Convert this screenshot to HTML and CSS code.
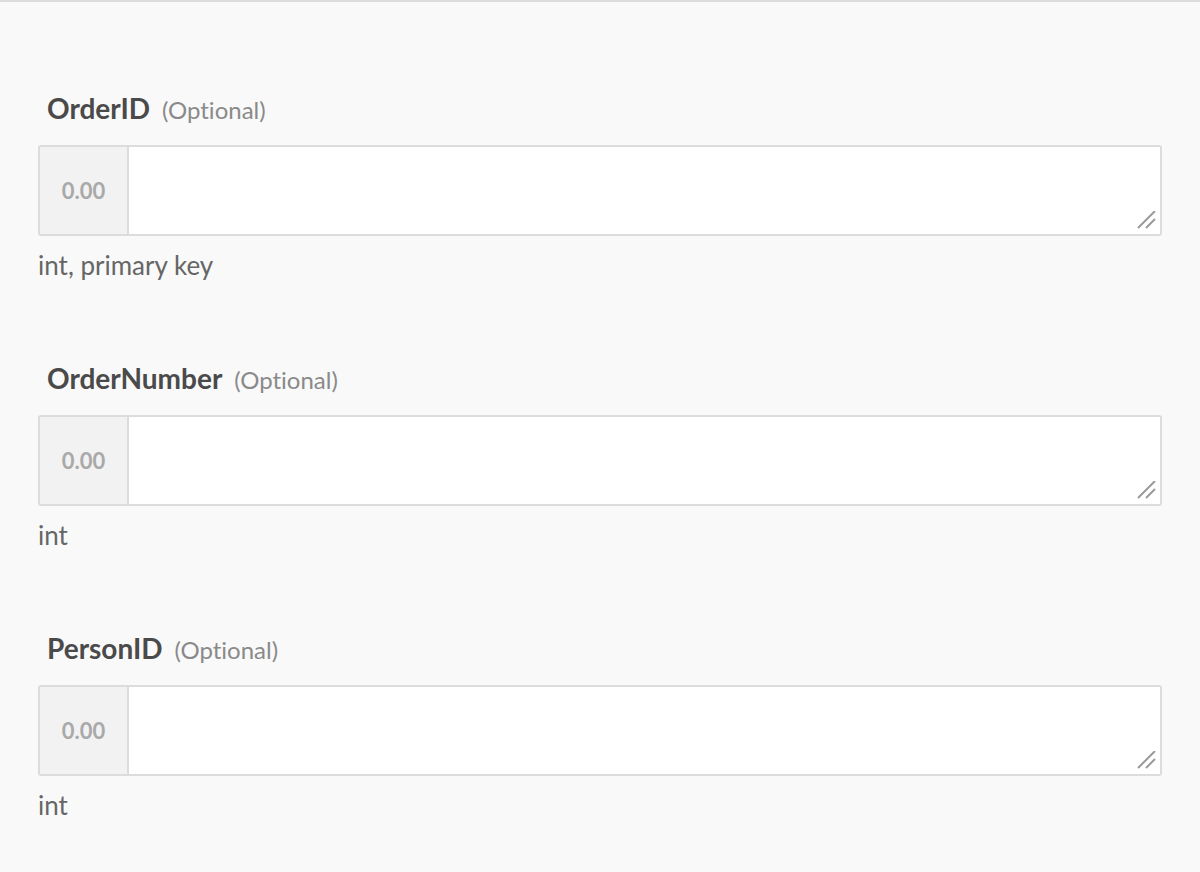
FILE: index.html
```html
<!DOCTYPE html>
<html>
<head>
<meta charset="utf-8">
<link rel="stylesheet" href="styles.css">
</head>
<body>
<main class="form">
  <div class="field">
    <label class="label"><span class="name">OrderID</span><span class="opt">(Optional)</span></label>
    <div class="group">
      <div class="addon">0.00</div>
      <textarea class="input"></textarea>
      <svg class="grip" width="20" height="20" viewBox="0 0 20 20"><path d="M1 17 L18 0 M9 17 L18 8" stroke="#9a9a9a" stroke-width="2" fill="none"/></svg>
    </div>
    <div class="help">int, primary key</div>
  </div>
  <div class="field">
    <label class="label"><span class="name">OrderNumber</span><span class="opt">(Optional)</span></label>
    <div class="group">
      <div class="addon">0.00</div>
      <textarea class="input"></textarea>
      <svg class="grip" width="20" height="20" viewBox="0 0 20 20"><path d="M1 17 L18 0 M9 17 L18 8" stroke="#9a9a9a" stroke-width="2" fill="none"/></svg>
    </div>
    <div class="help">int</div>
  </div>
  <div class="field">
    <label class="label"><span class="name">PersonID</span><span class="opt">(Optional)</span></label>
    <div class="group">
      <div class="addon">0.00</div>
      <textarea class="input"></textarea>
      <svg class="grip" width="20" height="20" viewBox="0 0 20 20"><path d="M1 17 L18 0 M9 17 L18 8" stroke="#9a9a9a" stroke-width="2" fill="none"/></svg>
    </div>
    <div class="help">int</div>
  </div>
</main>
</body>
</html>
```
FILE: styles.css
```css
html, body {
  margin: 0;
  padding: 0;
}
body {
  background: #f9f9f9;
  border-top: 2px solid #dcdcdc;
  font-family: Lato, "Open Sans", sans-serif;
  font-variant-ligatures: none;
  min-height: 870px;
}
.form {
  padding: 88px 38px 0 38px;
  display: flex;
  flex-direction: column;
  gap: 80px;
}
.field {
  display: flex;
  flex-direction: column;
}
.label {
  display: flex;
  align-items: baseline;
  padding-left: 9px;
  line-height: 36px;
  height: 36px;
  margin-bottom: 19px;
}
.name {
  font-weight: 700;
  font-size: 28px;
  color: #4a4a4a;
}
.opt {
  font-size: 24px;
  color: #8a8a8a;
  margin-left: 12px;
}
.group {
  position: relative;
  display: flex;
  border: 2px solid #dcdcdc;
  border-radius: 3px;
  overflow: hidden;
  background: #fff;
}
.addon {
  width: 87px;
  flex: none;
  background: #f2f2f2;
  border-right: 2px solid #dcdcdc;
  display: flex;
  align-items: center;
  justify-content: center;
  font-weight: 700;
  font-size: 22px;
  color: #a9a9a9;
}
.input {
  flex: 1;
  height: 87px;
  border: none;
  margin: 0;
  padding: 8px;
  box-sizing: border-box;
  resize: none;
  background: #fff;
  outline: none;
  font-family: inherit;
}
.grip {
  position: absolute;
  right: 3px;
  bottom: 3px;
}
.help {
  margin-top: 14px;
  line-height: 30px;
  font-size: 26px;
  color: #666;
}
```
